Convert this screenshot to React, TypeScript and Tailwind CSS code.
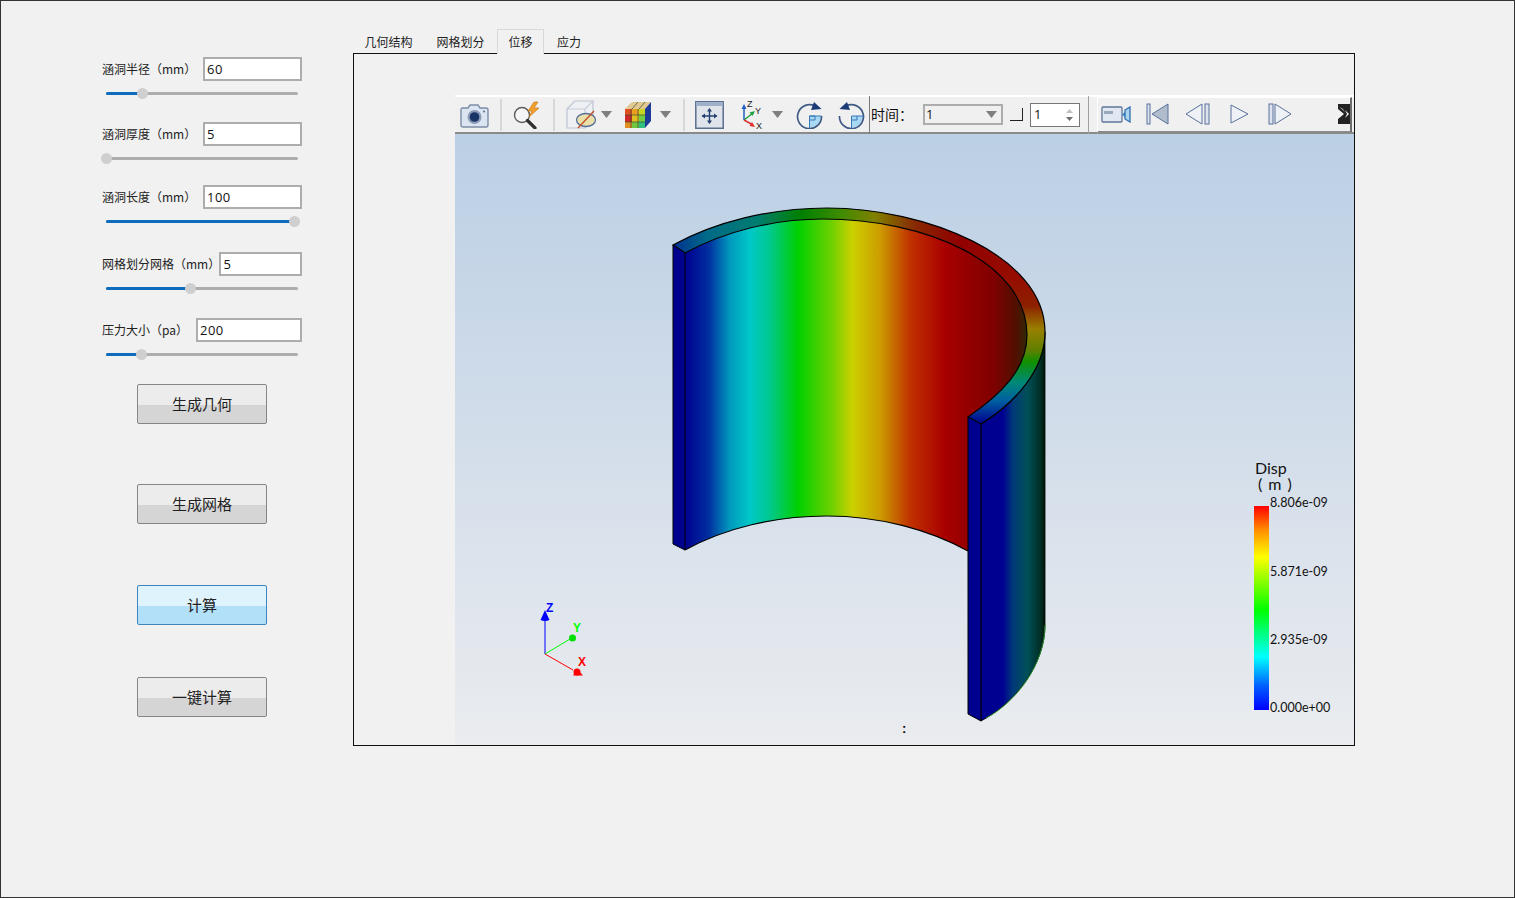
import type { ReactNode } from "react";

const cjk = "font-['Noto_Sans_CJK_SC','Liberation_Sans',sans-serif]";

function Field({
  label,
  value,
  inputClass,
  percent,
  className,
}: {
  label: string;
  value: string;
  inputClass: string;
  percent: number;
  className: string;
}) {
  return (
    <div className={className}>
      <div className="flex h-[24px] items-center justify-between pr-[51px] pl-[101px]">
        <span className={`${cjk} text-[12px] text-[#222]`}>{label}</span>
        <div
          className={`${inputClass} flex h-[24px] items-center border-2 border-[#adadad] bg-white pt-[1px] pl-[2px] font-['Open_Sans',sans-serif] text-[13px] tracking-[0.5px] text-[#111]`}
        >
          {value}
        </div>
      </div>
      <div className="relative mt-[11px] ml-[105px] h-[3px] w-[192px] rounded-sm bg-[#adadad]">
        <div
          className="h-[3px] rounded-sm bg-[#0f6cbd]"
          style={{ width: `${percent}%` }}
        />
        <div
          className="absolute top-[-4px] ml-[-5px] h-[11px] w-[11px] rounded-full bg-[#cfcfcf]"
          style={{ left: `${percent}%` }}
        />
      </div>
    </div>
  );
}

function ActionButton({
  children,
  className,
  active,
}: {
  children: ReactNode;
  className: string;
  active?: boolean;
}) {
  return (
    <button
      className={`${className} ${cjk} ml-[136px] block h-[40px] w-[130px] rounded-[2px] border text-[15px] text-[#1f1f1f] ${
        active
          ? "border-[#3c86bd] bg-[linear-gradient(#def3fc_0%,#def3fc_52%,#b3e0f9_52%,#b3e0f9_100%)]"
          : "border-[#858585] bg-[linear-gradient(#ececec_0%,#ececec_52%,#d5d5d5_52%,#d5d5d5_100%)]"
      }`}
    >
      {children}
    </button>
  );
}

function Sep({ className }: { className: string }) {
  return <div className={`${className} h-[32px] w-[2px] shrink-0 bg-[#d8d8d8]`} />;
}

function Arrow({ className }: { className: string }) {
  return (
    <svg className={`${className} shrink-0`} width="11" height="7" viewBox="0 0 11 7">
      <path d="M0 0H11L5.5 7Z" fill="#7f7f7f" />
    </svg>
  );
}

function Toolbar() {
  return (
    <div className="flex h-[39px] shrink-0 items-center border-t-2 border-b-2 border-t-white border-b-[#8a8a8a] bg-[#f0f0f0]">
      {/* camera */}
      <svg className="ml-[5px] shrink-0" width="29" height="26" viewBox="0 0 29 26">
        <path d="M2 6H8L10 3H18L20 6H26Q28 6 28 8V23Q28 25 26 25H3Q1 25 1 23V8Q1 6 2 6Z" fill="#dbe5f2" stroke="#7d8ca6" strokeWidth="1.4" />
        <circle cx="14.5" cy="15" r="7" fill="#8c9cb8" />
        <circle cx="14.5" cy="15" r="4.8" fill="#1a3468" />
        <circle cx="24" cy="9.5" r="1" fill="#5a6b8a" />
      </svg>
      <Sep className="ml-[11px]" />
      {/* search with bolt */}
      <svg className="ml-[10px] shrink-0" width="29" height="28" viewBox="0 0 29 28">
        <circle cx="10" cy="14" r="7.5" fill="#f4f6f8" stroke="#5c5c5c" strokeWidth="1.4" />
        <path d="M15.5 19.5L23 27" stroke="#2f2f2f" strokeWidth="3.2" strokeLinecap="round" />
        <path d="M22 1L16 10H20L17 16L27 7H22L26 1Z" fill="#f0a030" stroke="#c97d16" strokeWidth=".7" />
      </svg>
      <Sep className="ml-[12px]" />
      {/* cube with hidden slice */}
      <svg className="ml-[11px] shrink-0" width="31" height="30" viewBox="0 0 31 30">
        <path d="M1 9L9 1H27V19L19 28H1Z" fill="#eef0f4" stroke="#bcc4d2" strokeWidth="1.2" />
        <path d="M1 9H19V28M19 9L27 1" fill="none" stroke="#c6ccd8" strokeWidth="1.2" />
        <ellipse cx="20" cy="20" rx="9.5" ry="6.5" fill="#e8e0a8" stroke="#56709c" strokeWidth="1.3" />
        <path d="M12 28L28 11" stroke="#c4502a" strokeWidth="1.4" />
      </svg>
      <Arrow className="ml-[4px]" />
      {/* coloured cube */}
      <svg className="ml-[12px] shrink-0" width="28" height="28" viewBox="0 0 28 28">
        <path d="M1 8H21V27H1Z" fill="#e8d020" />
        <path d="M1 8H8V14H1Z" fill="#e05020" />
        <path d="M8 8H15V14H8Z" fill="#e8a020" />
        <path d="M15 8H21V14H15Z" fill="#c8d820" />
        <path d="M1 14H8V21H1Z" fill="#d02828" />
        <path d="M8 14H15V21H8Z" fill="#e0c020" />
        <path d="M15 14H21V21H15Z" fill="#70d040" />
        <path d="M1 21H8V27H1Z" fill="#e09020" />
        <path d="M8 21H15V27H8Z" fill="#70c840" />
        <path d="M15 21H21V27H15Z" fill="#30c080" />
        <path d="M1 8L8 1H27L21 8Z" fill="#e0c890" />
        <path d="M21 8L27 1V20L21 27Z" fill="#1c3c98" />
        <path d="M7 8V27M14 8V27M1 14H21M1 21H21M8 8L14 1M15 8L21 1" stroke="#3a4a30" strokeWidth=".7" />
      </svg>
      <Arrow className="ml-[8px]" />
      <Sep className="ml-[12px]" />
      {/* reset camera */}
      <svg className="ml-[10px] shrink-0" width="29" height="28" viewBox="0 0 29 28">
        <path d="M.8.8H28.2V27.2H.8Z" fill="#dfe3ea" stroke="#5a6e90" strokeWidth="1.5" />
        <path d="M1 1H28V5H1Z" fill="#9fb0c8" />
        <path d="M14.5 8V22M7.5 15H21.5" stroke="#23406e" strokeWidth="1.4" />
        <path d="M14.5 7L12 10.5H17ZM14.5 23L12 19.5H17ZM6.5 15L10 12.5V17.5ZM22.5 15L19 12.5V17.5Z" fill="#23406e" />
      </svg>
      {/* axes */}
      <svg className="ml-[15px] shrink-0" width="26" height="30" viewBox="0 0 26 30">
        <path d="M5 20V7" stroke="#2060c0" strokeWidth="1.5" />
        <path d="M5 4L2.5 9H7.5Z" fill="#2060c0" />
        <path d="M5 20L14 13" stroke="#20a040" strokeWidth="1.5" />
        <path d="M16 11L10.5 12.5L13.5 16Z" fill="#20a040" />
        <path d="M5 20L14 25" stroke="#e03030" strokeWidth="1.5" />
        <path d="M16 27L10.5 26L13 22Z" fill="#e03030" />
        <text x="8" y="7" fontSize="9" fontFamily="Liberation Sans" fill="#222">Z</text>
        <text x="16" y="14" fontSize="9" fontFamily="Liberation Sans" fill="#222">Y</text>
        <text x="17" y="29" fontSize="9" fontFamily="Liberation Sans" fill="#222">X</text>
      </svg>
      <Arrow className="ml-[7px]" />
      {/* rotate cw */}
      <svg className="ml-[13px] shrink-0" width="27" height="28" viewBox="0 0 27 28">
        <path d="M13.5 15H25A11.5 11.5 0 0 1 13.5 26.5Z" fill="#a8d8f4" />
        <path d="M13.5 15H19V19H13.5" fill="none" stroke="#3878b8" strokeWidth="1" />
        <path d="M19 5A12 12 0 1 0 25.5 15" fill="none" stroke="#3f5a84" strokeWidth="1.7" />
        <path d="M13.5 15V27M13.5 15H25.5" stroke="#3878b8" strokeWidth="1" />
        <path d="M25.5 8L15 9L18 1Z" fill="#1c3c78" />
      </svg>
      <svg className="ml-[15px] shrink-0" width="27" height="28" viewBox="0 0 27 28">
        <path d="M13.5 15H25A11.5 11.5 0 0 1 13.5 26.5Z" fill="#a8d8f4" />
        <path d="M8 5A12 12 0 1 1 1.5 15" fill="none" stroke="#3f5a84" strokeWidth="1.7" />
        <path d="M13.5 15V27M13.5 15H25.5M13.5 19H19V15" fill="none" stroke="#3878b8" strokeWidth="1" />
        <path d="M1.5 8L12 9L9 1Z" fill="#1c3c78" />
      </svg>
      <div className="ml-[4px] h-[38px] w-[1px] shrink-0 bg-[#7a7a7a]" />
      <span className={`${cjk} ml-[1px] w-[52px] shrink-0 text-[14px] text-[#111]`}>时间：</span>
      <div className="flex h-[21px] w-[80px] shrink-0 items-center justify-between border-2 border-[#adadad] pr-[4px] pl-[1px] font-['Open_Sans',sans-serif] text-[13px] text-[#111]">
        1
        <Arrow className="" />
      </div>
      <div className="ml-[7px] h-[13px] w-[13px] shrink-0 border-r border-b border-r-[#222] border-b-[#222]" />
      <div className="ml-[7px] flex h-[24px] w-[50px] shrink-0 items-center justify-between border border-[#777] bg-white pr-[6px] pl-[3px] font-['Open_Sans',sans-serif] text-[13px] text-[#111]">
        1
        <svg width="7" height="12" viewBox="0 0 7 12">
          <path d="M3.5 0L7 4H0Z" fill="#c0c0c0" />
          <path d="M3.5 12L7 8H0Z" fill="#707070" />
        </svg>
      </div>
      <div className="ml-[8px] h-[38px] w-[1px] shrink-0 bg-[#a0a0a0]" />
      <div className="ml-[8px] flex h-[36px] w-[255px] shrink-0 items-center border-t border-l border-r-2 border-b-2 border-t-white border-l-white border-r-[#6e6e6e] border-b-[#8a8a8a]">
        {/* video camera */}
        <svg className="ml-[3px] shrink-0" width="30" height="17" viewBox="0 0 30 17">
          <path d="M1 2Q1 1 2 1H20Q21 1 21 2V15Q21 16 20 16H2Q1 16 1 15Z" fill="#e2e8f2" stroke="#5f7598" strokeWidth="1.3" />
          <rect x="3" y="5" width="9" height="3" fill="#9aa8bc" />
          <path d="M21 8L24 6V11L21 9Z" fill="#4a90d0" />
          <path d="M24 4L29 1V16L24 13Z" fill="#a8d4f0" stroke="#2f6fae" strokeWidth="1.3" />
        </svg>
        {/* first */}
        <svg className="ml-[15px] shrink-0" width="23" height="22" viewBox="0 0 23 22">
          <rect x="1" y="1" width="3" height="20" fill="#dde3ee" stroke="#58709c" />
          <path d="M22 1V21L6 11Z" fill="#b0bccc" stroke="#58709c" />
        </svg>
        {/* prev */}
        <svg className="ml-[16px] shrink-0" width="25" height="22" viewBox="0 0 25 22">
          <path d="M17 1V21L1 11Z" fill="#eef1f6" stroke="#58709c" />
          <rect x="20" y="1" width="4" height="20" fill="#dde3ee" stroke="#58709c" />
        </svg>
        {/* play */}
        <svg className="ml-[20px] shrink-0" width="19" height="20" viewBox="0 0 19 20">
          <path d="M1 1V19L18 10Z" fill="#eef1f6" stroke="#58709c" />
        </svg>
        {/* last */}
        <svg className="ml-[19px] shrink-0" width="24" height="22" viewBox="0 0 24 22">
          <rect x="1" y="1" width="4" height="20" fill="#dde3ee" stroke="#58709c" />
          <path d="M7 1V21L23 11Z" fill="#eef1f6" stroke="#58709c" />
        </svg>
        {/* overflow grip */}
        <svg className="ml-[46px] shrink-0" width="12" height="20" viewBox="0 0 12 20">
          <path d="M0 0H12V20H0V15L6 10L0 5Z" fill="#222" />
          <path d="M1 3L5 6L7 9L5 5Z" fill="#ddd" />
          <path d="M7 6L11 10L7 14L9 10Z" fill="#f4f4f4" />
        </svg>
      </div>
    </div>
  );
}

const RIM =
  "M673 245C715 222 770 208 827 208C925 208 1045 255 1045 332C1045 370 1015 403 981 424L968 417C1000 395 1027 370 1027 335C1027 262 925 219 823 219C775 219 725 231 685 253Z";

function Cylinder() {
  return (
    <svg className="block h-full w-full" viewBox="455 134 899 611">
      <defs>
        <linearGradient id="wall" gradientUnits="userSpaceOnUse" x1="685" y1="0" x2="1027" y2="0">
          <stop offset="0" stopColor="#00008f" />
          <stop offset="0.07" stopColor="#0030a0" />
          <stop offset="0.13" stopColor="#0098bc" />
          <stop offset="0.19" stopColor="#00c8c8" />
          <stop offset="0.25" stopColor="#00c88c" />
          <stop offset="0.33" stopColor="#00d000" />
          <stop offset="0.43" stopColor="#70d000" />
          <stop offset="0.49" stopColor="#ccd000" />
          <stop offset="0.57" stopColor="#cc9c00" />
          <stop offset="0.66" stopColor="#c03000" />
          <stop offset="0.76" stopColor="#a80000" />
          <stop offset="0.9" stopColor="#800000" />
          <stop offset="0.97" stopColor="#501000" />
          <stop offset="1" stopColor="#302808" />
        </linearGradient>
        <linearGradient id="outer" gradientUnits="userSpaceOnUse" x1="981" y1="0" x2="1045" y2="0">
          <stop offset="0" stopColor="#000090" />
          <stop offset="0.34" stopColor="#000090" />
          <stop offset="0.5" stopColor="#003a78" />
          <stop offset="0.72" stopColor="#005058" />
          <stop offset="0.92" stopColor="#003028" />
          <stop offset="1" stopColor="#001808" />
        </linearGradient>
        <linearGradient id="rimTop" gradientUnits="userSpaceOnUse" x1="673" y1="0" x2="1010" y2="0">
          <stop offset="0" stopColor="#003090" />
          <stop offset="0.1" stopColor="#006a88" />
          <stop offset="0.25" stopColor="#007c70" />
          <stop offset="0.38" stopColor="#008000" />
          <stop offset="0.5" stopColor="#408c00" />
          <stop offset="0.6" stopColor="#808000" />
          <stop offset="0.72" stopColor="#882800" />
          <stop offset="0.85" stopColor="#900000" />
          <stop offset="1" stopColor="#960c00" />
        </linearGradient>
        <linearGradient id="rimSide" gradientUnits="userSpaceOnUse" x1="0" y1="276" x2="0" y2="424">
          <stop offset="0" stopColor="#960c00" />
          <stop offset="0.2" stopColor="#8c2000" />
          <stop offset="0.36" stopColor="#988000" />
          <stop offset="0.5" stopColor="#608000" />
          <stop offset="0.58" stopColor="#109000" />
          <stop offset="0.72" stopColor="#008878" />
          <stop offset="0.84" stopColor="#0060a0" />
          <stop offset="1" stopColor="#000090" />
        </linearGradient>
        <clipPath id="aboveSeam">
          <rect x="455" y="134" width="899" height="142" />
        </clipPath>
        <clipPath id="belowSeam">
          <rect x="455" y="276" width="899" height="200" />
        </clipPath>
      </defs>
      {/* outer shell */}
      <path
        d="M981 424C1015 403 1045 370 1045 332V625C1045 665 1015 703 981 721Z"
        fill="url(#outer)"
        stroke="#000"
        strokeWidth="0.8"
      />
      <path d="M1045 625C1045 665 1015 703 986 718" fill="none" stroke="#1f8a2a" strokeWidth="1" />
      {/* inner wall */}
      <path
        d="M685 253C725 231 775 219 823 219C925 219 1027 262 1027 335C1027 370 1000 395 968 417V551C930 530 880 516 827 516C775 516 725 528 685 550Z"
        fill="url(#wall)"
      />
      <path d="M685 550C725 528 775 516 827 516C880 516 930 530 968 551" fill="none" stroke="#000" strokeWidth="1.2" />
      {/* top rim */}
      <path d={RIM} fill="url(#rimTop)" clipPath="url(#aboveSeam)" />
      <path d={RIM} fill="url(#rimSide)" clipPath="url(#belowSeam)" />
      <path d={RIM} fill="none" stroke="#000" strokeWidth="1.2" />
      {/* cut faces */}
      <path d="M673 245L685 253V550L673 544Z" fill="#00008f" stroke="#000" strokeWidth="1" />
      <path d="M968 417L981 424V721L968 714Z" fill="#00008f" stroke="#000" strokeWidth="1" />
      {/* axes triad */}
      <path d="M545 654V618" stroke="#0000ff" strokeWidth="1" />
      <path d="M545 610L540.5 620Q545 622 549.5 620Z" fill="#0000ff" />
      <path d="M545 654L570 639" stroke="#00ff00" strokeWidth="1" />
      <circle cx="572.5" cy="638" r="3.5" fill="#00e000" />
      <path d="M545 654L573 670" stroke="#ff0000" strokeWidth="1" />
      <circle cx="577" cy="672" r="3.5" fill="#ff0000" />
      <path d="M577 668.5L583 675.5H573Z" fill="#ff0000" />
    </svg>
  );
}

export default function App() {
  return (
    <div className="flex h-[898px] w-[1515px] border border-[#333] bg-[#f1f1f1]">
      {/* parameter panel */}
      <div className="w-[352px] shrink-0">
        <Field className="mt-[56px]" label="涵洞半径（mm）" value="60" inputClass="w-[99px]" percent={19} />
        <Field className="mt-[27px]" label="涵洞厚度（mm）" value="5" inputClass="w-[99px]" percent={0} />
        <Field className="mt-[25px]" label="涵洞长度（mm）" value="100" inputClass="w-[99px]" percent={98} />
        <Field className="mt-[29px]" label="网格划分网格（mm）" value="5" inputClass="w-[83px]" percent={44} />
        <Field className="mt-[28px]" label="压力大小（pa）" value="200" inputClass="w-[106px]" percent={18} />
        <ActionButton className="mt-[28px]">生成几何</ActionButton>
        <ActionButton className="mt-[60px]">生成网格</ActionButton>
        <ActionButton className="mt-[61px]" active>
          计算
        </ActionButton>
        <ActionButton className="mt-[52px]">一键计算</ActionButton>
      </div>

      {/* result tabs */}
      <div className="w-[1002px] shrink-0 pt-[28px]">
        <div className={`${cjk} flex h-[24px] items-end text-[12px] text-[#222]`}>
          <div className="flex h-[24px] w-[71px] items-end justify-center pb-[2px]">几何结构</div>
          <div className="flex h-[24px] w-[73px] items-end justify-center pb-[2px]">网格划分</div>
          <div className="relative z-10 mb-[-1px] flex h-[25px] w-[47px] items-end justify-center border-x border-t border-[#d9d9d9] bg-[#f1f1f1] pb-[3px]">
            位移
          </div>
          <div className="flex h-[24px] w-[50px] items-end justify-center pb-[2px]">应力</div>
        </div>
        <div className="flex h-[693px] justify-end border border-[#111]">
          <div className="mt-[41px] flex w-[899px] flex-col">
            <Toolbar />
            <div className="relative flex-1 bg-[linear-gradient(#bbcfe5,#eaecef)]">
              <Cylinder />
              {/* legend */}
              <div className="absolute top-[326px] left-[800px] font-['Lato',sans-serif] text-[#111]">
                <div className="text-[16px] leading-[16px]">Disp</div>
                <div className="pl-[3px] text-[16px] leading-[16px] tracking-[1px]">( m )</div>
              </div>
              <div className="absolute top-[372px] left-[799px] h-[204px] w-[15px] bg-[linear-gradient(#ff0000_0%,#ff9000_12%,#ffff00_25%,#00ff00_51%,#00ffff_74%,#0060ff_88%,#0000ff_100%)]" />
              <div className="absolute top-[361px] left-[815px] h-[222px] w-[70px] font-['Lato',sans-serif] text-[12.5px] leading-[16px] whitespace-nowrap text-[#111]">
                <div className="absolute top-0">8.806e-09</div>
                <div className="absolute top-[69px]">5.871e-09</div>
                <div className="absolute top-[137px]">2.935e-09</div>
                <div className="absolute top-[205px]">0.000e+00</div>
              </div>
              <div className="absolute top-[587px] left-[447px] font-['Liberation_Sans',sans-serif] text-[13px] leading-[16px] font-bold text-black">
                :
              </div>
              <div className="absolute top-[468px] left-[91px] font-['Liberation_Sans',sans-serif] text-[12px] leading-[12px] font-bold text-[#0000ff]">Z</div>
              <div className="absolute top-[488px] left-[118px] font-['Liberation_Sans',sans-serif] text-[12px] leading-[12px] font-bold text-[#00ff00]">Y</div>
              <div className="absolute top-[522px] left-[123px] font-['Liberation_Sans',sans-serif] text-[12px] leading-[12px] font-bold text-[#ff0000]">X</div>
            </div>
          </div>
        </div>
      </div>
    </div>
  );
}
